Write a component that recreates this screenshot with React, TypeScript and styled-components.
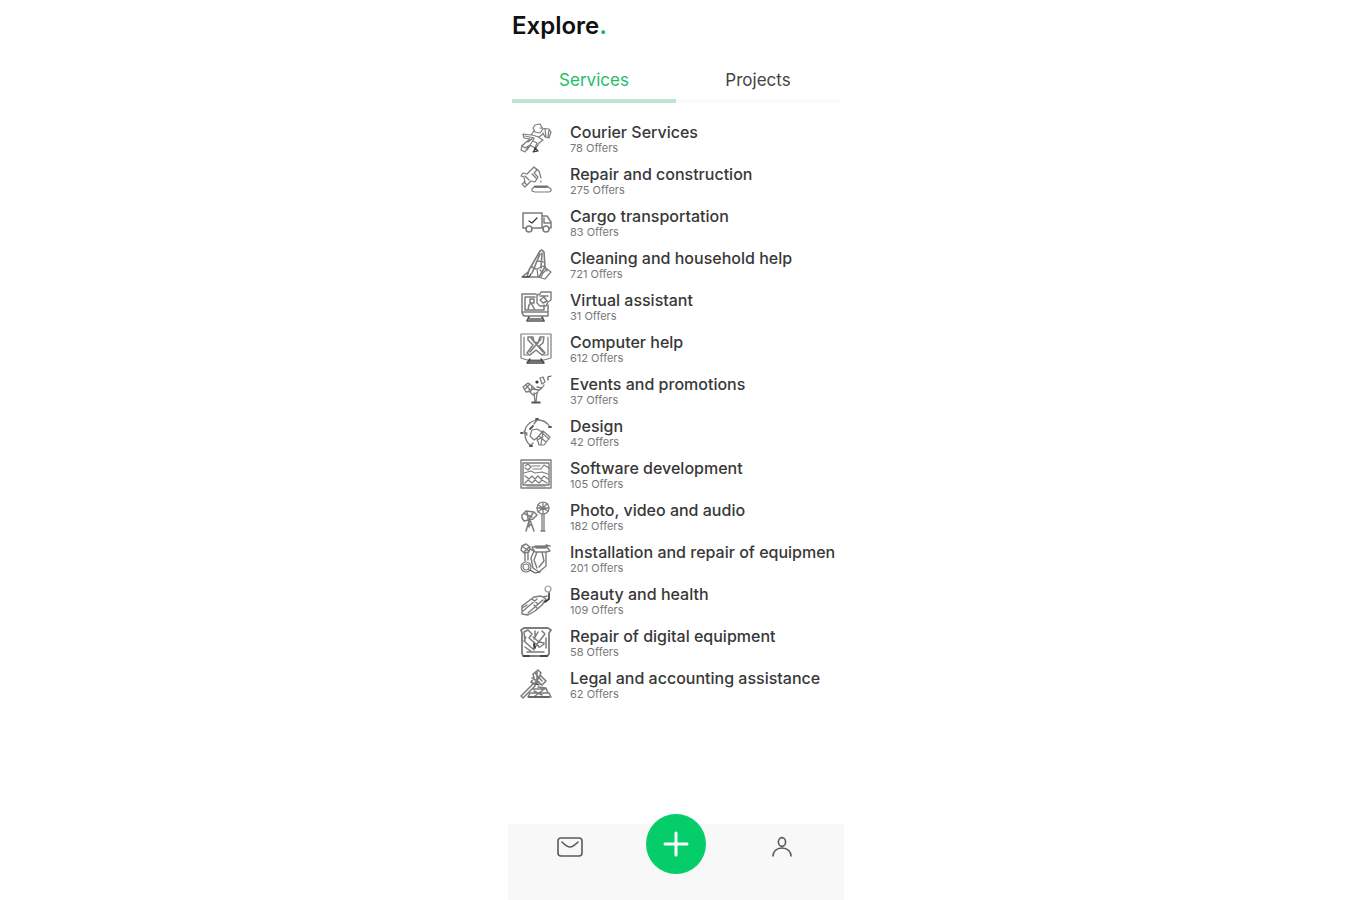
import React, { useState } from "react";
import styled, { createGlobalStyle } from "styled-components";

const GlobalStyle = createGlobalStyle`
  * { box-sizing: border-box; }
  body {
    margin: 0;
    background: #ffffff;
    color: #383838;
    font-family: Inter, "Open Sans", sans-serif;
  }
`;

const Screen = styled.div`
  width: 100%;
  max-width: 337px;
  min-height: 100vh;
  margin: 0 auto;
  display: flex;
  flex-direction: column;
`;

const Title = styled.h1`
  margin: 0;
  padding: 11px 5px 0;
  font-size: 24px;
  line-height: 30px;
  font-weight: 600;
  color: #111111;
`;

const Dot = styled.span`
  color: #0fb95c;
`;

const Tabs = styled.div`
  display: flex;
  margin: 19px 4px 0 5px;
`;

const Tab = styled.button<{ $active: boolean }>`
  flex: 1;
  height: 43px;
  padding: 0;
  border: 0;
  border-bottom: 4px solid ${(p) => (p.$active ? "#bce6cf" : "#fafafa")};
  background: none;
  font: inherit;
  font-size: 17px;
  line-height: 20px;
  color: ${(p) => (p.$active ? "#22bd68" : "#444444")};
  cursor: pointer;
`;

const List = styled.ul`
  flex: 1;
  margin: 0;
  padding: 20px 0 40px 13px;
  list-style: none;
`;

const Row = styled.li`
  height: 42px;
`;

const RowLink = styled.a`
  display: flex;
  gap: 18px;
  color: inherit;
  text-decoration: none;
`;

const RowIcon = styled.svg`
  flex: none;
  width: 32px;
  height: 32px;
  fill: none;
  stroke: #7c7c7c;
  stroke-width: 1.2;
  stroke-linecap: round;
  stroke-linejoin: round;
`;

const RowText = styled.span`
  flex: 1;
  min-width: 0;
  overflow: hidden;
  white-space: nowrap;
`;

const Name = styled.span`
  display: block;
  font-size: 16px;
  line-height: 18px;
  font-weight: 500;
`;

const Offers = styled.span`
  display: block;
  font-size: 11px;
  line-height: 14px;
  color: #777777;
`;

const NavBar = styled.nav`
  display: grid;
  grid-template-columns: 1fr 60px 1fr;
  column-gap: 14px;
  align-items: start;
  justify-items: center;
  height: 76px;
  margin: 0 0 0 1px;
  background: #f8f8f8;
`;

const NavButton = styled.button`
  display: flex;
  margin-top: 9px;
  padding: 0;
  border: 0;
  background: none;
  cursor: pointer;
`;

const NavIcon = styled.svg`
  width: 28px;
  height: 28px;
  fill: none;
  stroke: #5a5a5a;
  stroke-width: 1.6;
  stroke-linecap: round;
`;

const AddButton = styled.button`
  display: flex;
  align-items: center;
  justify-content: center;
  width: 60px;
  height: 60px;
  margin-top: -10px;
  padding: 0;
  border: 0;
  border-radius: 50%;
  background: #05cd69;
  cursor: pointer;
`;

const PlusIcon = styled.svg`
  width: 26px;
  height: 26px;
  stroke: #ffffff;
  stroke-width: 3;
  stroke-linecap: round;
`;

const dark = "#333333";

const services: { name: string; offers: number; icon: React.ReactNode }[] = [
  {
    name: "Courier Services",
    offers: 78,
    icon: (
      <>
        <path d="M13 5l2-3 5-1 3 5-3 4-5-1zM20 5l9 1 2 3-2 6-4-1-2-4M25 6l1 8M29 7l-1 7" />
        <path d="M14 8l-3 4-8-1 1 4 6 1-5 4-3 3 3 2 5-3 4-6M12 12l7 2 4-3M18 14l5 3-4 3-4 7M2 22l-1 5 4 2 3-5M13 18l4 2-2 5-5-3M5 13l9 2M8 19l5-4M7 27l3-4" />
        <path d="M14 28l1-3 3 3-5 1z" stroke={dark} />
      </>
    ),
  },
  {
    name: "Repair and construction",
    offers: 275,
    icon: (
      <>
        <path d="M11 5l3-3 3 3-3 3 4 4-3 5-4-1-6 6-3-3 3-2-1-5-3-1 2-3 4 1 4-4zM14 2l5 4 2 7M5 11l4 4M12 9l4 4M21 16v1M4 17l3 3" />
        <path d="M15 21h12l4 3v2l-2 1H15l-3-1v-2z" />
        <path d="M15 22h12" stroke="#555555" strokeWidth="1.6" />
      </>
    ),
  },
  {
    name: "Cargo transportation",
    offers: 83,
    icon: (
      <>
        <path d="M3 6h19v15H12M6 21H3V6M22 9h5l4 6v6h-2M24 11v5h6M22 21h1" strokeWidth="1.5" />
        <circle cx="9" cy="22" r="3" strokeWidth="1.6" />
        <circle cx="26" cy="22" r="3" strokeWidth="1.6" />
        <path d="M9 14l3 2 5-5" stroke={dark} />
      </>
    ),
  },
  {
    name: "Cleaning and household help",
    offers: 721,
    icon: (
      <>
        <path d="M20 2l2-1 2 2 1 15-6 10H7l2-7L20 2zM20 5l-8 19M18 12l5 1M8 23l-6 5h7M12 18l4 2M22 4l-1 15" strokeWidth="1.6" />
        <path d="M17 20l6-3 8 6-6 7-7-2zM20 21l3 3 3-3M23 24l-2 4M25 18l2 4" />
        <path d="M3 28h6l2-3" stroke={dark} />
      </>
    ),
  },
  {
    name: "Virtual assistant",
    offers: 31,
    icon: (
      <>
        <path d="M16 3H2v19l2 3h24V14M2 21h26M5 6h10M5 6v13h19v-5M8 19l1-5 2-2 4 7M10 8h4v4h-4z" strokeWidth="1.5" />
        <path d="M17 4l3-1 1-2h10v8l-3 2-2 4h-6l-3-3zM20 5h8M20 9l4-3 3 4-4 2z" strokeWidth="1.4" />
        <path d="M9 26l-2 4h17l-2-4M10 28h11M8 30h15" stroke="#555555" strokeWidth="1.7" />
      </>
    ),
  },
  {
    name: "Computer help",
    offers: 612,
    icon: (
      <>
        <path d="M1 1h30v24l-7 2H7l-6-2zM4 4v18h5M28 4v18h-5" />
        <path d="M8 4h5l1 5 4 1 2-6h4l-1 6-4 3 6 7-3 2-6-5-6 5-3-2 6-8-5-5zM11 5l12 14M21 6L10 19" strokeWidth="1.5" />
        <path d="M10 26l-3 4h17l-3-4M9 28h13M8 30h15" stroke="#444444" strokeWidth="1.5" />
      </>
    ),
  },
  {
    name: "Events and promotions",
    offers: 37,
    icon: (
      <>
        <path d="M3 12l5-4 4 3-1 5-5 1zM6 10l4 5M10 9l-5 5M12 11l3 3M9 16l4 4 5-3M17 12l5 1 2-3M18 16l4-3M14 18l1 9M17 18l-1 9M20 3l3-1 2 5-3 2zM12 14l7 1" strokeWidth="1.3" />
        <path d="M28 2l3-1M28 2v3M12 27h8v1h-8z" stroke="#555555" />
        <circle cx="17" cy="7" r="1" stroke={dark} fill={dark} />
      </>
    ),
  },
  {
    name: "Design",
    offers: 42,
    icon: (
      <>
        <path d="M16 3C9 5 4 10 5 17c0 6 2 9 6 12M18 3c5 0 9 2 12 7M2 16h5M17 3l-3 4M4 14l3 4M10 29l3-3" strokeWidth="1.3" />
        <path d="M12 13l5-1 5 3-4 5-4 3-4-4zM17 21l6-7 7 6-6 8h-5zM19 19l7 6M22 16l7 6M17 23l6-3M23 15l-2 12" />
        <path d="M16 2h2M1 16h1M29 10h2M10 12l3-3M10 29h2" stroke="#555555" strokeWidth="1.8" />
      </>
    ),
  },
  {
    name: "Software development",
    offers: 105,
    icon: (
      <>
        <path d="M1 1h30v28H1zM3 4h26M3 4v22h26V4" strokeWidth="1.4" />
        <path d="M5 7l3-2 3 3-3 3-3-2M12 7h8M13 10h8l3-4 5 3M4 14l7-2 4 2 7-1 6 2M5 17l4 3 3-3 3 3 3-3 3 3 3-3 4 3M5 24l3-3 4 3 3-3 4 3 3-3 5 3M7 27h18" />
      </>
    ),
  },
  {
    name: "Photo, video and audio",
    offers: 182,
    icon: (
      <>
        <circle cx="23" cy="7" r="6" />
        <path d="M18 4l10 6M27 3l-9 8M23 2v10M17 7h12M22 13v17M24 13v17M21 30h4" strokeWidth="1.3" />
        <path d="M2 14l4-4 8 1 3 3-4 4-9 2-2-3zM5 13l7 3M7 11l1 7M13 12l-4 6M9 20l-3 10M10 19l4 11M8 24h4M9 20v6" strokeWidth="1.5" />
      </>
    ),
  },
  {
    name: "Installation and repair of equipmen",
    offers: 201,
    icon: (
      <>
        <path d="M2 3l4-2 4 3-1 5-5 1-3-3zM3 4l6 4M9 4l-5 5M5 10v8M8 9v8M12 4h15l3 4-4 1H15zM26 2l4 1M10 6l4 2M14 8l-3 7 2 10 6 4 7-6V10M17 9l-3 8 3 8M22 9l2 9-5 6" strokeWidth="1.4" />
        <circle cx="6" cy="24" r="5" />
        <circle cx="6" cy="24" r="3" />
        <path d="M10 27l5 3 5-1M15 3h12M16 5h10" stroke="#555555" />
      </>
    ),
  },
  {
    name: "Beauty and health",
    offers: 109,
    icon: (
      <>
        <circle cx="28" cy="4" r="3" stroke="#999999" />
        <path d="M2 21l8-6 4-3 7-1 5 3-4 6-7 6-7 4-6-1zM3 26l14-12M8 28l15-13M2 23l5-3M12 14l6 5M14 20l3 3M23 12l4-1" strokeWidth="1.4" />
        <path d="M29 8v6l-4 3" stroke={dark} strokeWidth="1.6" />
      </>
    ),
  },
  {
    name: "Repair of digital equipment",
    offers: 58,
    icon: (
      <>
        <path d="M1 3l3-2h24l3 2-2 3v21l-2 2H3l-1-3V6z" strokeWidth="1.8" />
        <path d="M4 5l4-2 4 4-3 4 8 7-4 4-8-7zM22 4l3 3-8 10 2 3M15 4v6M13 10l6 5 5 1M5 20l7 5M20 20l4-3M6 10l-2 4M18 5l-4 7M26 11v10M7 25h17M14 15v8" strokeWidth="1.5" />
        <path d="M14 17l1 4M4 29h5M21 29h6" stroke={dark} strokeWidth="1.7" />
      </>
    ),
  },
  {
    name: "Legal and accounting assistance",
    offers: 62,
    icon: (
      <>
        <path d="M13 5l5-4 3 3-1 2 6 6-4 4-4-3-3 3-4-3 3-4zM15 4l7 8M12 9l7 4M20 7l-5 7M17 3v8" strokeWidth="1.6" />
        <path d="M15 17L3 29l-2-2 13-13M18 18l8 1 2 5M12 20h13M10 24h19l2 4H8zM14 22l8 4M23 21l-8 6M10 28h20" strokeWidth="1.5" />
        <path d="M16 15l3 1M9 28h20" stroke={dark} />
      </>
    ),
  },
];

const tabs = ["Services", "Projects"];

export default function App() {
  const [active, setActive] = useState("Services");

  return (
    <>
      <GlobalStyle />
      <Screen>
        <Title>
          Explore<Dot>.</Dot>
        </Title>
        <Tabs role="tablist">
          {tabs.map((tab) => (
            <Tab
              key={tab}
              type="button"
              role="tab"
              aria-selected={tab === active}
              $active={tab === active}
              onClick={() => setActive(tab)}
            >
              {tab}
            </Tab>
          ))}
        </Tabs>
        <List>
          {services.map((service) => (
            <Row key={service.name}>
              <RowLink href="#">
                <RowIcon viewBox="0 0 32 32" aria-hidden="true">
                  {service.icon}
                </RowIcon>
                <RowText>
                  <Name>{service.name}</Name>
                  <Offers>{service.offers} Offers</Offers>
                </RowText>
              </RowLink>
            </Row>
          ))}
        </List>
        <NavBar>
          <NavButton type="button" aria-label="Messages">
            <NavIcon viewBox="0 0 28 28">
              <rect x="2" y="5" width="24" height="18" rx="3" />
              <path d="M6 9c3 3 5 5 8 5s5-2 8-5" />
            </NavIcon>
          </NavButton>
          <AddButton type="button" aria-label="Add">
            <PlusIcon viewBox="0 0 26 26">
              <path d="M13 2v22M2 13h22" />
            </PlusIcon>
          </AddButton>
          <NavButton type="button" aria-label="Profile">
            <NavIcon viewBox="0 0 28 28">
              <ellipse cx="14" cy="9" rx="3.6" ry="4.4" />
              <path d="M5 23c0-4 3-8 9-8s9 4 9 8" />
            </NavIcon>
          </NavButton>
        </NavBar>
      </Screen>
    </>
  );
}
